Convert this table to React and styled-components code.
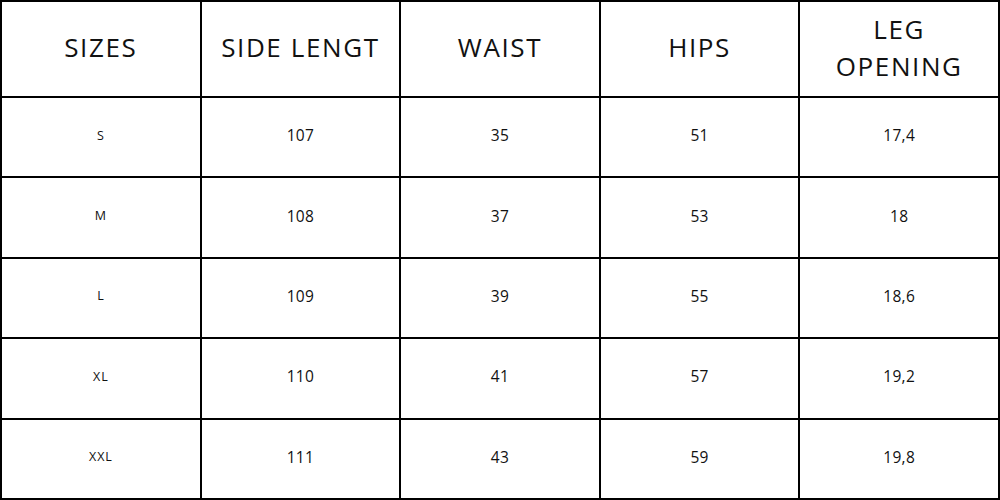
import React from "react";
import styled, { createGlobalStyle } from "styled-components";

const Global = createGlobalStyle`
  html, body { margin: 0; padding: 0; background: #fff; }
  #root { width: 1000px; height: 500px; }
`;

const Table = styled.div`
  width: 1000px;
  height: 500px;
  box-sizing: border-box;
  display: grid;
  grid-template-columns: repeat(5, 1fr);
  grid-template-rows: 94px repeat(5, 1fr);
  gap: 2px;
  padding: 2px;
  background: #000;
  font-family: "Open Sans", "DejaVu Sans", sans-serif;
  color: #111;
`;

const Cell = styled.div`
  background: #fff;
  display: flex;
  align-items: center;
  justify-content: center;
  text-align: center;
`;

const HeadCell = styled(Cell)`
  font-size: 26px;
  font-weight: 400;
  letter-spacing: 1.6px;
  line-height: 37px;
  padding-bottom: 3px;
`;

const DataCell = styled(Cell)`
  font-size: ${(p) => (p.$small ? "12.5px" : "15.5px")};
  letter-spacing: ${(p) => (p.$small ? "0.8px" : "0.3px")};
  padding-bottom: 4px;
`;

const headers = ["SIZES", "SIDE LENGT", "WAIST", "HIPS", ["LEG", "OPENING"]];
const rows = [
  ["S", "107", "35", "51", "17,4"],
  ["M", "108", "37", "53", "18"],
  ["L", "109", "39", "55", "18,6"],
  ["XL", "110", "41", "57", "19,2"],
  ["XXL", "111", "43", "59", "19,8"],
];

export default function App() {
  return (
    <>
      <Global />
      <Table>
        {headers.map((h, i) => (
          <HeadCell key={i}>
            {Array.isArray(h) ? (
              <span>
                {h[0]}
                <br />
                {h[1]}
              </span>
            ) : (
              h
            )}
          </HeadCell>
        ))}
        {rows.map((r, ri) =>
          r.map((v, ci) => (
            <DataCell key={ri + "-" + ci} $small={ci === 0}>
              {v}
            </DataCell>
          ))
        )}
      </Table>
    </>
  );
}
